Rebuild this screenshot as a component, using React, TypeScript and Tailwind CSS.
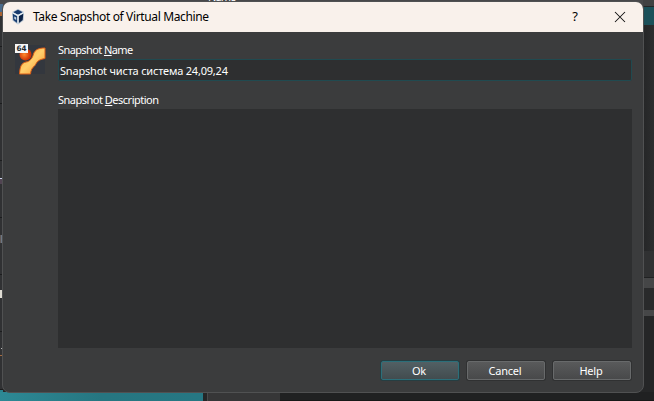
import type { ReactNode } from "react";

function BoxLogo() {
  return (
    <svg width="14" height="16" viewBox="0 0 14 16">
      <path d="M7 0 13 3 12.5 11.5 7 15.5 1.5 11.5 1 3Z" fill="#aebdcc" />
      <path d="M7 .8 11.7 3.2 7 5.7 2.3 3.2Z" fill="#16396c" />
      <path d="M1.8 4.8 6.2 7.2V14L2.3 11Z" fill="#183e72" />
      <path d="M12.2 4.8 7.8 7.2V14L11.7 11Z" fill="#0d2347" />
      <path d="M1.2 3.5 7 6.5 12.8 3.5M7 6.5V14.8" stroke="#e9f0f5" strokeWidth="1.2" fill="none" />
      <path d="M3.3 7.5 5.2 8.6V11L3.3 9.7Z" fill="#c9d8e5" />
    </svg>
  );
}

function SnapshotIcon() {
  return (
    <svg width="32" height="32" viewBox="0 0 32 32">
      <defs>
        <linearGradient id="pipe" x1="0" y1="0" x2="1" y2="1">
          <stop offset="0" stopColor="#ffa830" />
          <stop offset=".5" stopColor="#ffcf6c" />
          <stop offset="1" stopColor="#f59028" />
        </linearGradient>
        <radialGradient id="ball" cx=".4" cy=".5">
          <stop offset="0" stopColor="#ff8a30" />
          <stop offset="1" stopColor="#cf3206" />
        </radialGradient>
      </defs>
      <rect x="1" y="1" width="30" height="29" fill="#33373e" />
      <circle cx="11.5" cy="10.5" r="6" fill="url(#ball)" />
      <path d="M31 4C25 4 21 5.5 19.5 10C18.5 14 16 17.5 12 18C7.5 19 6 22 5.5 30H16.5C17 26 18 24 20 22.5C23 20 21.5 16 31 14.5Z" fill="url(#pipe)" stroke="#dc5c16" strokeWidth="1" />
      <rect x="1" y="0" width="13" height="9" fill="#f6f6f7" />
      <text x="2.5" y="7.2" fontSize="7.5" fontWeight="700" fontFamily="DejaVu Sans, sans-serif" textLength="10" lengthAdjust="spacingAndGlyphs" fill="#222831">64</text>
    </svg>
  );
}

function DialogButton({ primary = false, children }: { primary?: boolean; children: ReactNode }) {
  return (
    <button
      className={`flex h-[19px] w-[78px] items-center justify-center rounded-[2px] border pt-px pr-0.5 text-[11px] tracking-[-0.2px] text-white ${
        primary
          ? "border-[#2b6f7a] bg-linear-to-b from-[#526064] to-[#424c4f] shadow-[0_0_0_1px_#263e42]"
          : "border-[#686a6b] bg-linear-to-b from-[#595a5b] to-[#48494a] shadow-[0_0_0_1px_#303132]"
      }`}
    >
      {children}
    </button>
  );
}

function Backdrop() {
  return (
    <div className="flex h-full flex-col">
      <div className="flex h-[392px] justify-between overflow-hidden">
        <div className="w-[3px] shrink-0 bg-[#303133]">
          <div className="h-1 bg-[#48484a]" />
          <div className="h-2 bg-[#4a6b8c]" />
          <div className="h-1 bg-[#a86232]" />
          <div className="h-[30px]" />
          <div className="h-px bg-[#1b1c1d]" />
          <div className="h-14" />
          <div className="h-px bg-[#1b1c1d]" />
          <div className="h-14" />
          <div className="h-px bg-[#1b1c1d]" />
          <div className="h-[17px]" />
          <div className="h-px bg-[#cbd4ea]" />
          <div className="h-[5px] bg-[#514452]" />
          <div className="h-[33px]" />
          <div className="h-px bg-[#1b1c1d]" />
          <div className="h-[17px]" />
          <div className="h-2 w-[3px] bg-linear-to-r from-[#5a4a40] to-[#7da7cf]" />
          <div className="h-[31px]" />
          <div className="h-px bg-[#1b1c1d]" />
          <div className="h-[15px]" />
          <div className="h-2 w-0.5 bg-[#dedbd3]" />
          <div className="h-[33px]" />
          <div className="h-px bg-[#1b1c1d]" />
          <div className="h-4" />
          <div className="ml-px h-px bg-[#b6b6b6]" />
          <div className="h-1.5" />
          <div className="h-px bg-[#a66c40]" />
          <div className="h-[33px]" />
          <div className="h-px bg-[#1b1c1d]" />
          <div className="h-5 bg-[#2b818d]" />
        </div>
        <div className="h-1.5 flex-1 overflow-hidden bg-[#48484a] pl-[205px] text-[11px] leading-3 tracking-[-0.9px] text-white">
          <div className="-mt-[9px]">Name</div>
        </div>
        <div className="w-[11px] bg-[#242526]">
          <div className="h-1.5 bg-[#414142]" />
          <div className="h-px bg-[#242526]" />
          <div className="h-[18px] bg-[#1c5059]" />
          <div className="h-[226px] bg-linear-to-r from-[#252627] to-[#2c2d2e]" />
          <div className="h-[26px] bg-[#303132]" />
          <div className="h-px bg-[#202122]" />
          <div className="h-2.5 bg-[#454647]" />
          <div className="h-[22px] bg-[#292a2b]" />
          <div className="h-1.5 bg-[#464748]" />
          <div className="h-[76px] bg-[#252627]" />
        </div>
      </div>
      <div className="flex h-[9px]">
        <div className="w-[203px] bg-linear-to-r from-[#2d8995] via-[#267681] to-[#267783]" />
        <div className="w-1 bg-[#252627]" />
        <div className="w-px bg-[#49494a]" />
        <div className="w-[72px] bg-[#363637]" />
        <div className="flex-1 border-b border-[#171818] bg-[#202122]" />
      </div>
    </div>
  );
}

export default function App() {
  return (
    <div className="relative h-[401px] w-[654px] overflow-hidden bg-[#252627] font-['Noto_Sans','Open_Sans',sans-serif]">
      <Backdrop />
      <section className="absolute top-px left-0.5 flex h-[392px] w-[642px] flex-col overflow-hidden rounded-lg border border-[#505152] bg-[#3b3c3d]">
        <header className="flex h-[30px] shrink-0 items-center bg-[#f9f1eb] pl-2 text-black">
          <BoxLogo />
          <h1 className="ml-2 text-[12px] leading-4 font-normal tracking-[-0.36px] whitespace-nowrap">Take Snapshot of Virtual Machine</h1>
          <span className="ml-auto mr-[36px] text-[13px]">?</span>
          <svg className="mr-[17px]" width="12" height="12" viewBox="0 0 12 12" stroke="#111" strokeWidth="1.05">
            <path d="M1 1 11 11M11 1 1 11" />
          </svg>
        </header>
        <main className="flex flex-1 pt-[10px] pr-[11px] text-[11px] text-white">
          <div className="w-[55px] shrink-0 pt-0.5 pl-[11px]">
            <SnapshotIcon />
          </div>
          <div className="flex flex-1 flex-col">
            <label className="h-4 leading-[15px] tracking-[-0.6px]">Snapshot <u>N</u>ame</label>
            <div className="mt-px flex h-[22px] items-center rounded-[2px] border border-[#204a50] bg-[#2e2f30] pt-0.5 pl-px tracking-[-0.2px] whitespace-nowrap">
              Snapshot чиста система 24,09,24
            </div>
            <label className="mt-[11px] h-[17px] leading-[15px] tracking-[-0.5px]">Snapshot <u>D</u>escription</label>
            <div className="h-[239px] bg-[#2e2f30]" />
            <footer className="mt-[13px] flex justify-end gap-2 pr-px">
              <DialogButton primary>Ok</DialogButton>
              <DialogButton>Cancel</DialogButton>
              <DialogButton>Help</DialogButton>
            </footer>
          </div>
        </main>
      </section>
    </div>
  );
}
